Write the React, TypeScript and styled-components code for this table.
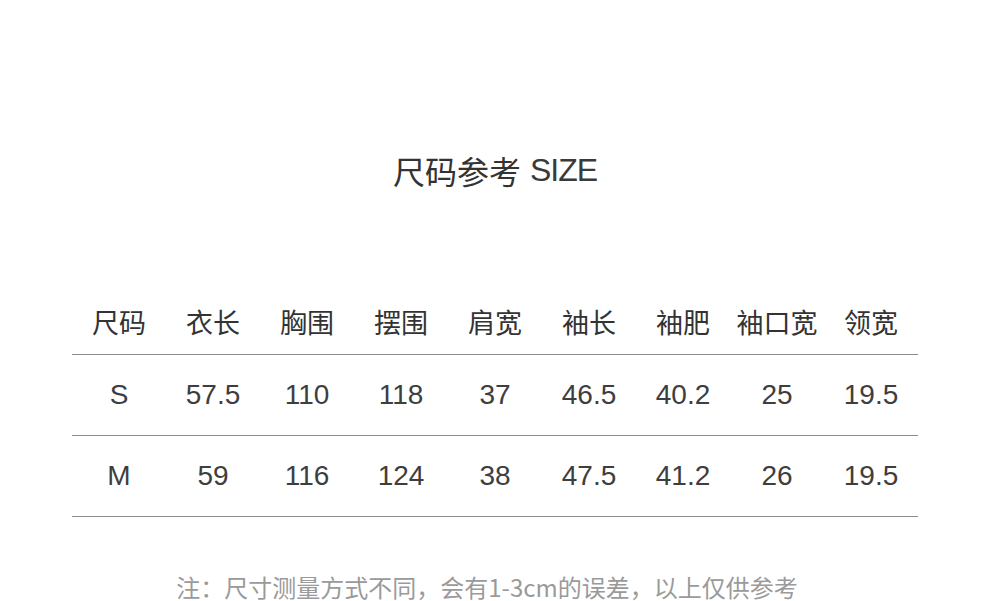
import React from 'react';
import styled, { createGlobalStyle } from 'styled-components';

const GlobalStyle = createGlobalStyle`
  html, body {
    margin: 0;
    padding: 0;
    background: #fff;
  }
  body {
    font-family: "Liberation Sans", "Noto Sans CJK SC", sans-serif;
  }
`

const Page = styled.div`
  width: 990px;
  height: 601px;
  overflow: hidden;
  display: flex;
  flex-direction: column;
  align-items: center;
  padding-top: 150px;
  box-sizing: border-box;
`

const Title = styled.h1`
  margin: 0;
  height: 40px;
  line-height: 40px;
  font-size: 32px;
  font-weight: 400;
  color: #333;
  font-family: "Noto Sans CJK SC", sans-serif;
  display: flex;
  align-items: center;
  gap: 9px;

  span {
    font-family: "Liberation Sans", sans-serif;
    letter-spacing: -1px;
    color: #3a3a3a;
  }
`

const Table = styled.div`
  width: 846px;
  margin-top: 99px;
  display: flex;
  flex-direction: column;
`

const Row = styled.div<{ $head?: boolean }>`
  display: grid;
  grid-template-columns: repeat(9, 94px);
  height: ${p => (p.$head ? '66px' : '81px')};
  box-sizing: border-box;
  border-bottom: 1px solid #8c8c8c;
  align-items: center;
`

const Cell = styled.div<{ $head?: boolean }>`
  text-align: center;
  white-space: nowrap;
  color: ${p => (p.$head ? '#333' : '#3e3e3e')};
  font-size: ${p => (p.$head ? '27px' : '28px')};
  font-family: ${p => (p.$head
    ? '"Noto Sans CJK SC", sans-serif'
    : '"Liberation Sans", sans-serif')};
  font-weight: 400;
  line-height: 1;
`

const Note = styled.p`
  margin: 55px 16px 0 0;
  height: 30px;
  line-height: 30px;
  font-size: 24px;
  color: #9a9a9a;
  font-family: "Noto Sans CJK SC", sans-serif;
  white-space: nowrap;
`

const headers = ['尺码', '衣长', '胸围', '摆围', '肩宽', '袖长', '袖肥', '袖口宽', '领宽']

const rows = [
  ['S', '57.5', '110', '118', '37', '46.5', '40.2', '25', '19.5'],
  ['M', '59', '116', '124', '38', '47.5', '41.2', '26', '19.5'],
]

const App = () => {
  return <>
    <GlobalStyle />
    <Page>
      <Title>尺码参考<span>SIZE</span></Title>
      <Table>
        <Row $head>
          {headers.map(h => <Cell $head key={h}>{h}</Cell>)}
        </Row>
        {rows.map(r => (
          <Row key={r[0]}>
            {r.map((v, i) => <Cell key={i}>{v}</Cell>)}
          </Row>
        ))}
      </Table>
      <Note>注：尺寸测量方式不同，会有1-3cm的误差，以上仅供参考</Note>
    </Page>
  </>
}

export default App
